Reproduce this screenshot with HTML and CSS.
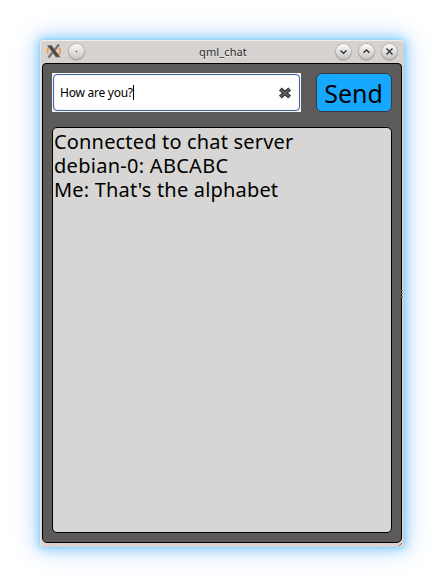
FILE: index.html
```
<!DOCTYPE html>
<html lang="en">
<head>
<meta charset="utf-8">
<title>qml_chat</title>
<link rel="stylesheet" href="styles.css">
</head>
<body>
<main class="window">
  <header class="titlebar">
    <svg class="app-icon" width="16" height="16" viewBox="0 0 16 16" fill="none">
      <path d="M5 2.500C2 4 1 7 2 10.500M11 13C14 11 15 8 13.500 5" stroke="#f39b3b" stroke-width="1.700"/>
      <path d="M13 1.500L2.500 14.500" stroke="#77736e" stroke-width="2.300"/>
      <path d="M1.500 2.500H5.500L14 14H10Z" fill="#4b4844" stroke="#77736e" stroke-width=".7"/>
    </svg>
    <span class="round"><svg width="15" height="15" viewBox="0 0 15 15"><circle cx="7.500" cy="7.500" r=".8" fill="#555"/></svg></span>
    <span class="title">qml_chat</span>
    <span class="round"><svg width="15" height="15" viewBox="0 0 15 15"><path d="M4.500 6.500L7.500 9.200L10.500 6.500"/></svg></span>
    <span class="round"><svg width="15" height="15" viewBox="0 0 15 15"><path d="M4.500 8.700L7.500 6L10.500 8.700"/></svg></span>
    <span class="round"><svg width="15" height="15" viewBox="0 0 15 15"><path d="M4.500 4.500L10.500 10.500M10.500 4.500L4.500 10.500"/></svg></span>
  </header>
  <section class="content">
    <div class="composer">
      <div class="field">
        <div class="field-inner">
          <span class="message">How are you?</span><span class="caret"></span>
          <svg class="clear" width="14" height="14" viewBox="0 0 14 14"><path d="M2.300 3L11.700 11M11.700 3L2.300 11" stroke="#292929" stroke-width="4.200"/><path d="M2.800 3.400L11.200 10.600M11.200 3.400L2.800 10.600" stroke="#5b5b5b" stroke-width="2.400"/></svg>
        </div>
      </div>
      <div class="send"><span>Send</span></div>
    </div>
    <div class="log">
      <div class="line connected">Connected to chat server</div>
      <div class="line peer">debian-0: ABCABC</div>
      <div class="line own">Me: That's the alphabet</div>
    </div>
  </section>
  <i class="grip side"></i>
  <i class="grip corner"></i>
</main>
</body>
</html>
```
FILE: styles.css
```
* { box-sizing: border-box; }
body {
  margin: 0;
  padding: 40px;
  height: 587px;
  overflow: hidden;
  background: #fff;
  color: #000;
  font-family: "Noto Sans", "Open Sans", sans-serif;
}
.window {
  position: relative;
  width: 364px;
  height: 507px;
  padding: 0 2px 4px;
  display: flex;
  flex-direction: column;
  border-radius: 4px;
  background: linear-gradient(#d6d2d0 0 460px, #ddd0d1);
  box-shadow: inset 0 1px #f1efee, inset 1px 0 #e7e1df, 0 0 3px #7bd0fb, 0 0 11px 2px #86d0fb, 0 0 28px 5px #cfe2fd;
}
.titlebar {
  height: 23px;
  flex: none;
  display: flex;
  align-items: center;
  padding: 0 5px 1px 4px;
  gap: 8px;
}
.app-icon { flex: none; margin-right: -1px; }
.round {
  width: 15px;
  height: 15px;
  flex: none;
  border-radius: 50%;
  background: linear-gradient(#fbfbfa, #c8c5c3);
  box-shadow: 0 0 1px .5px #a5a19e, 0 1px 2px #8c8986;
}
.round svg {
  display: block;
  fill: none;
  stroke: #343434;
  stroke-width: 1.4;
}
.round circle { stroke: none; }
.title {
  flex: 1;
  padding: 2px 0 0 26px;
  text-align: center;
  font-size: 11px;
  letter-spacing: .1px;
  line-height: 16px;
  color: #292929;
  text-shadow: 0 1px #efeded;
}
.content {
  flex: 1;
  min-height: 0;
  display: flex;
  flex-direction: column;
  gap: 15px;
  padding: 9px;
  border: 1px solid #000;
  border-radius: 4px 4px 5px 5px;
  background: #5d5b59;
}
.composer { height: 39px; flex: none; display: flex; gap: 15px; }
.field { width: 249px; padding: 1px; background: #f6f6f6; }
.field-inner {
  height: 37px;
  display: flex;
  align-items: center;
  padding: 0 7px 0 6px;
  border: 1px solid #3f669f;
  border-radius: 4px;
  background: #fff;
  box-shadow: inset 0 0 1px #759bd0;
}
.message { font-size: 12px; letter-spacing: -.25px; white-space: nowrap; }
.caret { width: 1px; height: 15px; background: #000; }
.clear { margin-left: auto; }
.send {
  width: 76px;
  display: flex;
  align-items: center;
  justify-content: center;
  border: 1px solid #343b40;
  border-radius: 6px;
  background: #16a8ff;
  font-size: 25px;
  line-height: 36px;
  padding: 0 1px 0 0;
}
.log {
  flex: 1;
  padding: 2px 1px;
  border: 1px solid #000;
  border-radius: 5px;
  background: #d7d6d4;
  font-size: 20px;
  line-height: 24px;
  white-space: nowrap;
}
.connected { letter-spacing: .17px; }
.peer { letter-spacing: .28px; }
.own { letter-spacing: .18px; }
.grip {
  position: absolute;
  width: 2px;
  height: 8px;
  background: repeating-linear-gradient(#77716f 0 1px, transparent 1px 3px);
}
.side { right: 1px; top: 250px; }
.corner { right: 2px; bottom: 1px; width: 4px; height: 4px; background: repeating-linear-gradient(135deg, #8d8583 0 1px, transparent 1px 3px); }
```
